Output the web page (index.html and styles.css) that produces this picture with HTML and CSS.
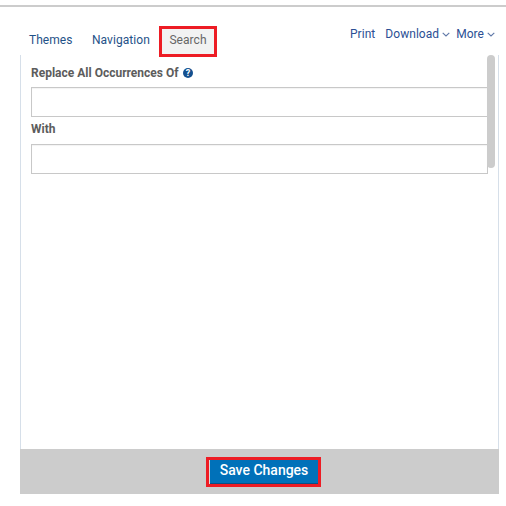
FILE: index.html
```html
<!DOCTYPE html>
<html lang="en">
<head>
<meta charset="utf-8">
<title>Search</title>
<link rel="stylesheet" href="styles.css">
</head>
<body>
<div class="topline"></div>
<div class="wrap">
  <header class="bar">
    <nav class="tabs">
      <a class="tab tab-themes">Themes</a>
      <a class="tab tab-nav">Navigation</a>
      <a class="tab tab-active">Search</a>
    </nav>
    <div class="actions">
      <a class="action">Print</a>
      <a class="action">Download<svg class="chev" viewBox="0 0 8 5"><path d="M.7.8 4 4 7.3.8" fill="none" stroke="#5f78a8" stroke-width="1.1"/></svg></a>
      <a class="action">More<svg class="chev" viewBox="0 0 8 5"><path d="M.7.8 4 4 7.3.8" fill="none" stroke="#5f78a8" stroke-width="1.1"/></svg></a>
    </div>
  </header>
  <main class="panel">
    <div class="thumb"></div>
    <label class="label">Replace All Occurrences Of
      <svg class="help" viewBox="0 0 10 10"><circle cx="5" cy="5" r="5" fill="#14508f"/><text x="5" y="8.4" text-anchor="middle" class="help-q">?</text></svg>
    </label>
    <input class="field" type="text">
    <label class="label label-second">With</label>
    <input class="field" type="text">
  </main>
  <footer class="foot">
    <button class="save" type="button">Save Changes</button>
  </footer>
</div>
</body>
</html>
```
FILE: styles.css
```css
* { box-sizing: border-box; }
html, body { margin: 0; padding: 0; background: #fff; }
body { font-family: Roboto, "Noto Sans", sans-serif; color: #5a5a5a; }
.topline { height: 2px; margin-top: 5px; background: #cccccc; }
.wrap { width: 479px; margin-left: 20px; }
.bar { display: flex; justify-content: space-between; height: 48px; padding-top: 19px; position: relative; z-index: 1; }
.tabs { display: flex; height: 31px; padding-left: 9px; }
.tab { font-size: 12px; line-height: 28px; color: #1f5288; display: block; white-space: nowrap; letter-spacing: .05px; }
.tab-themes { width: 63px; }
.tab-nav { width: 67px; }
.tab-active { width: 58px; text-align: center; line-height: 23px; color: #666; background: #f2f2f2; border: 3px solid #ed1c24; }
.actions { display: flex; gap: 10px; padding-right: 4px; height: 16px; }
.action { font-size: 12px; line-height: 16px; color: #2b4f94; white-space: nowrap; display: flex; align-items: center; letter-spacing: .05px; }
.actions .action:nth-child(3) { margin-left: -4px; }
.chev { width: 8px; height: 5px; margin-left: 3px; margin-top: 1px; }
.panel { position: relative; height: 394px; padding: 9px 10px 0; border-left: 1px solid #d6dfe9; border-right: 1px solid #d6dfe9; }
.thumb { position: absolute; top: 0; right: 3px; width: 8px; height: 113px; border-radius: 4px; background: #cccccc; }
.label { display: flex; align-items: center; gap: 5px; height: 17px; font-size: 12px; font-weight: 700; color: #5c5c5c; }
.label-second { height: 18px; margin-top: 3px; padding-bottom: 1px; }
.help { width: 10px; height: 10px; }
.help-q { font-size: 9px; font-weight: 700; fill: #fff; }
.field { display: block; width: 457px; height: 30px; margin-top: 6px; padding: 0; background: #fff; border: 1px solid #c8c8c8; border-radius: 0; box-shadow: inset 0 1px 1px rgba(0,0,0,.05); }
.foot { display: flex; justify-content: center; height: 45px; padding-top: 8px; background: #cccccc; }
.save { width: 115px; height: 30px; padding: 0 0 4px 2px; margin-left: 7px; font-family: inherit; font-size: 14px; font-weight: 500; line-height: 1; color: #fff; background: #0071b9; border: 3px solid #ed1c24; box-shadow: inset 1px 0 0 #d9d9d9, inset 0 -1px 0 #0a4f86; }
```
